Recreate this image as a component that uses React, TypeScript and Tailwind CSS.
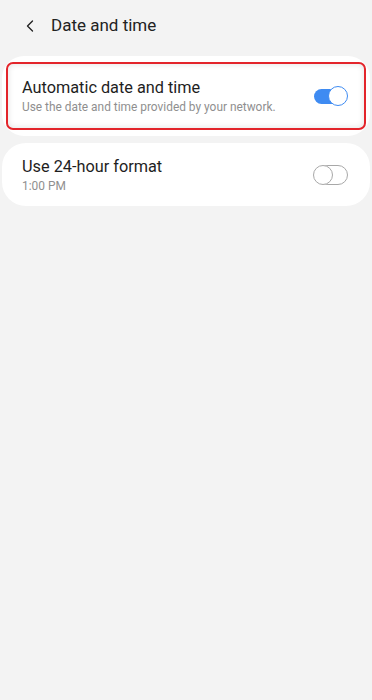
import { ChevronLeft } from 'lucide-react';

function Toggle({ on }: { on: boolean }) {
  if (on) {
    return (
      <div className="relative w-[34px] h-[20px] flex items-center">
        <div className="h-[15px] w-[30px] rounded-full bg-[#3e8bf2]" />
        <div className="absolute right-0 top-0 w-[20px] h-[20px] rounded-full bg-white border-[1.5px] border-[#3e8bf2]" />
      </div>
    );
  }
  return (
    <div className="relative w-[35px] h-[20px] flex items-center">
      <div className="absolute right-0 h-[20px] w-[30px] rounded-full border-[1.5px] border-[#a8a8a8]" />
      <div className="absolute left-0 top-0 w-[20px] h-[20px] rounded-full bg-white border-[1.5px] border-[#a8a8a8]" />
    </div>
  );
}

export default function App() {
  return (
    <div
      className="w-[372px] h-[700px] bg-[#f3f3f3] overflow-hidden"
      style={{ fontFamily: 'Roboto, "Noto Sans", sans-serif' }}
    >
      <div className="h-[52px] flex items-center pl-[20px]">
        <ChevronLeft size={20} strokeWidth={1.6} className="text-[#222]" />
        <span className="ml-[11px] text-[17px] text-[#222]">Date and time</span>
      </div>

      <div className="mx-[2px] mt-[4px] bg-white rounded-[22px] px-[4px] py-[6px]">
        <div className="rounded-[7px] border-2 border-[#e3252b] shadow-[inset_0_0_6px_rgba(0,0,0,0.12)] flex items-center justify-between pl-[14px] pr-[16px] h-[68px]">
          <div className="flex flex-col">
            <span className="text-[16.3px] text-[#1e1e1e] leading-[22px]">Automatic date and time</span>
            <span className="text-[11.9px] text-[#8f8f8f] leading-[16px]">Use the date and time provided by your network.</span>
          </div>
          <Toggle on />
        </div>
      </div>

      <div className="mx-[2px] mt-[7px] bg-white rounded-[24px] h-[63px] flex items-center justify-between pl-[20px] pr-[22px]">
        <div className="flex flex-col">
          <span className="text-[16.3px] text-[#1e1e1e] leading-[22px]">Use 24-hour format</span>
          <span className="text-[11.9px] text-[#8f8f8f] leading-[16px]">1:00 PM</span>
        </div>
        <Toggle on={false} />
      </div>
    </div>
  );
}
